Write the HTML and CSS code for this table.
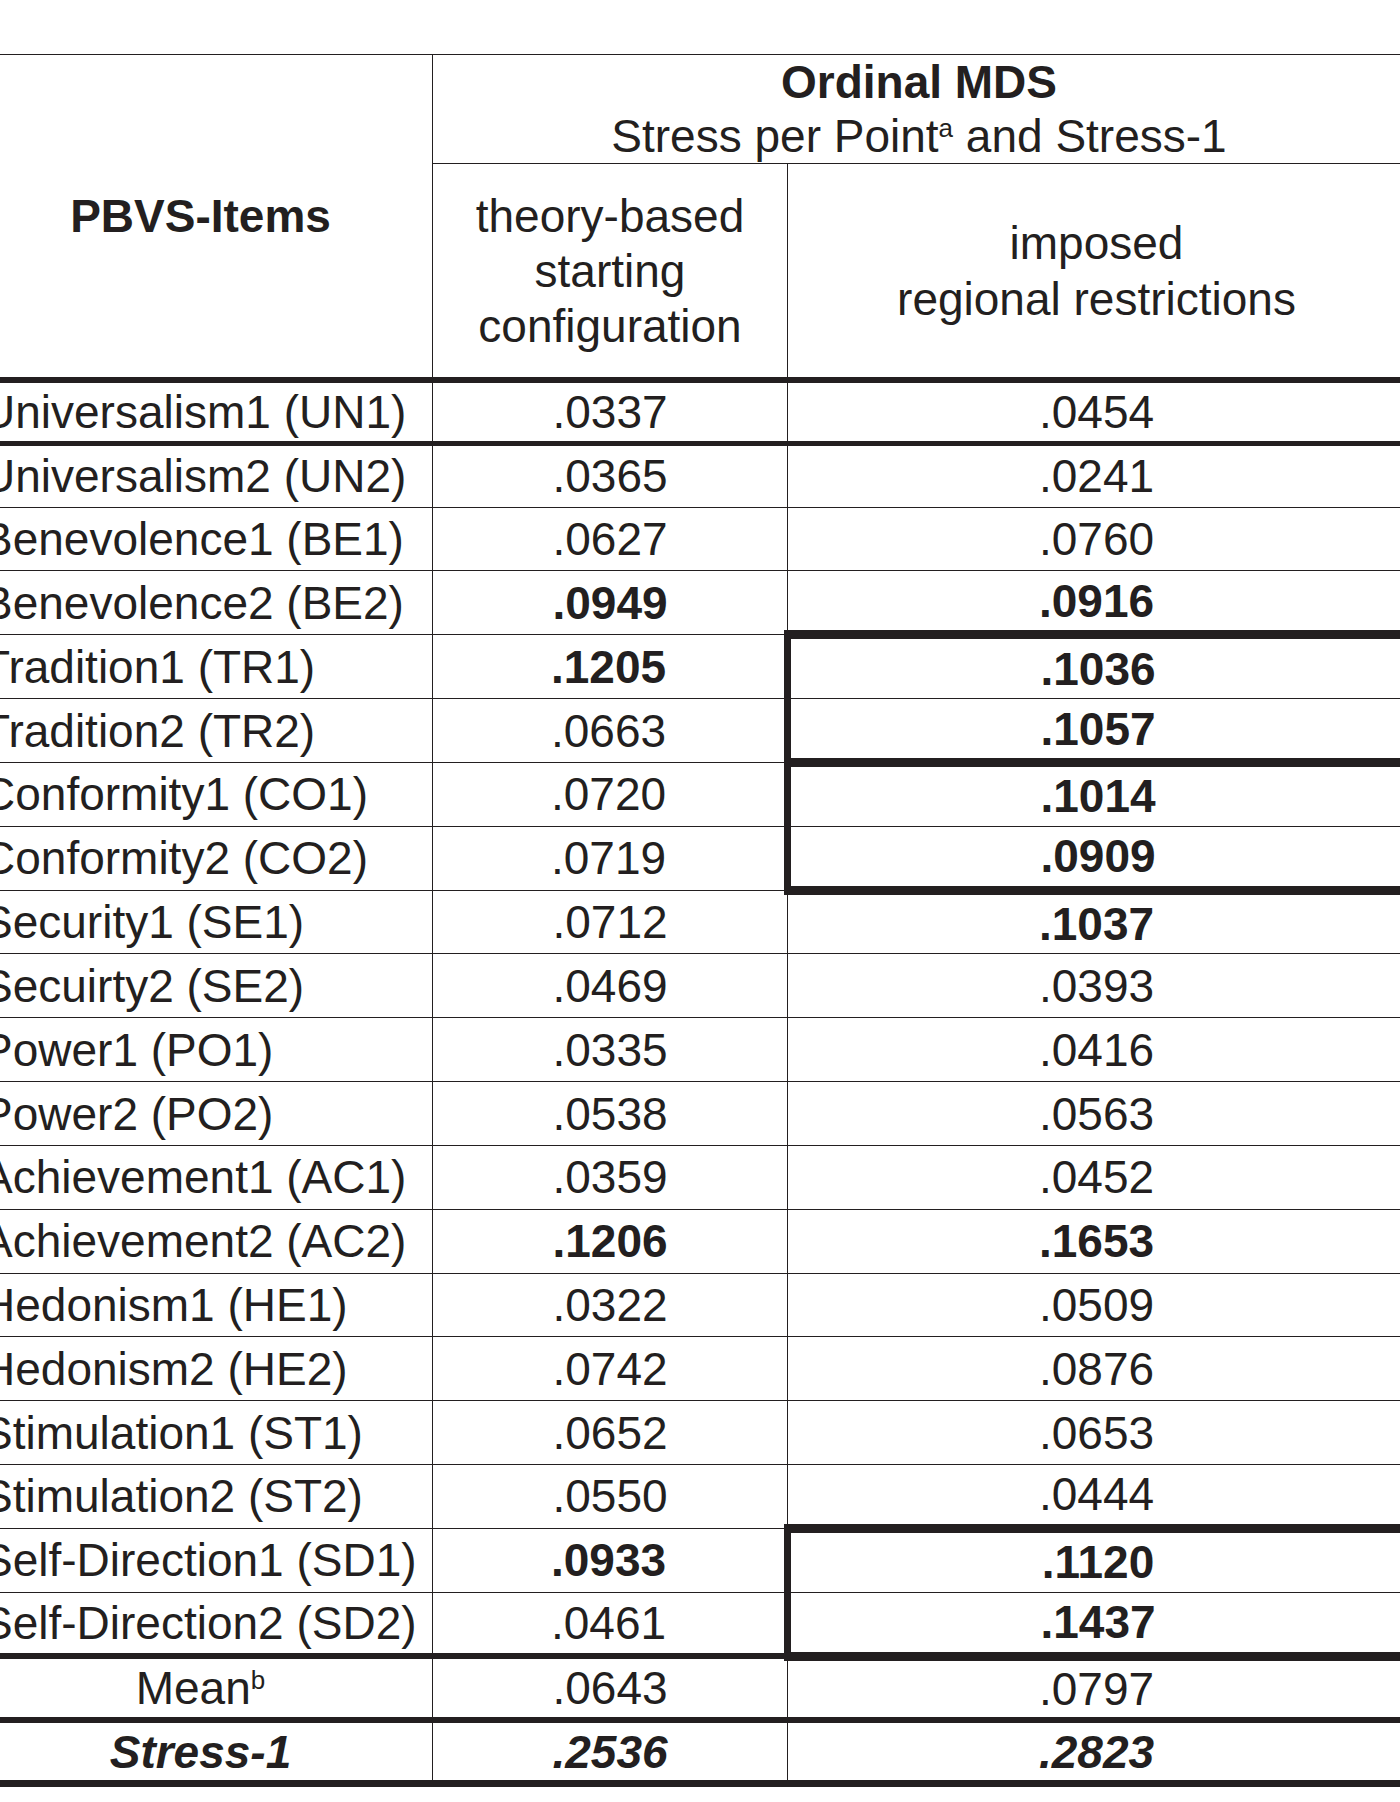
FILE: index.html
```html
<!DOCTYPE html>
<html lang="en">
<head>
<meta charset="utf-8">
<title>Ordinal MDS Stress per Point</title>
<link rel="stylesheet" href="styles.css">
</head>
<body>
<table class="mds">
  <colgroup>
    <col class="c-item">
    <col class="c-theory">
    <col class="c-imposed">
  </colgroup>
  <thead>
    <tr class="h1">
      <th class="items" rowspan="2">PBVS-Items</th>
      <th class="group" colspan="2"><span class="b">Ordinal MDS</span><br>Stress per Point<sup>a</sup> and Stress-1</th>
    </tr>
    <tr class="h2">
      <th class="sub">theory-based<br>starting<br>configuration</th>
      <th class="sub sub2">imposed<br>regional restrictions</th>
    </tr>
  </thead>
  <tbody>
    <tr class="row top-thick"><td class="name">Universalism1 (UN1)</td><td>.0337</td><td>.0454</td></tr>
    <tr class="row top-mid"><td class="name">Universalism2 (UN2)</td><td>.0365</td><td>.0241</td></tr>
    <tr class="row"><td class="name">Benevolence1 (BE1)</td><td>.0627</td><td>.0760</td></tr>
    <tr class="row"><td class="name">Benevolence2 (BE2)</td><td class="b">.0949</td><td class="b">.0916</td></tr>
    <tr class="row"><td class="name">Tradition1 (TR1)</td><td class="b">.1205</td><td class="b box box-top">.1036</td></tr>
    <tr class="row"><td class="name">Tradition2 (TR2)</td><td>.0663</td><td class="b box box-bottom">.1057</td></tr>
    <tr class="row"><td class="name">Conformity1 (CO1)</td><td>.0720</td><td class="b box box-top">.1014</td></tr>
    <tr class="row"><td class="name">Conformity2 (CO2)</td><td>.0719</td><td class="b box box-bottom">.0909</td></tr>
    <tr class="row"><td class="name">Security1 (SE1)</td><td>.0712</td><td class="b">.1037</td></tr>
    <tr class="row"><td class="name">Secuirty2 (SE2)</td><td>.0469</td><td>.0393</td></tr>
    <tr class="row"><td class="name">Power1 (PO1)</td><td>.0335</td><td>.0416</td></tr>
    <tr class="row"><td class="name">Power2 (PO2)</td><td>.0538</td><td>.0563</td></tr>
    <tr class="row"><td class="name">Achievement1 (AC1)</td><td>.0359</td><td>.0452</td></tr>
    <tr class="row"><td class="name">Achievement2 (AC2)</td><td class="b">.1206</td><td class="b">.1653</td></tr>
    <tr class="row"><td class="name">Hedonism1 (HE1)</td><td>.0322</td><td>.0509</td></tr>
    <tr class="row"><td class="name">Hedonism2 (HE2)</td><td>.0742</td><td>.0876</td></tr>
    <tr class="row"><td class="name">Stimulation1 (ST1)</td><td>.0652</td><td>.0653</td></tr>
    <tr class="row"><td class="name">Stimulation2 (ST2)</td><td>.0550</td><td>.0444</td></tr>
    <tr class="row"><td class="name">Self-Direction1 (SD1)</td><td class="b">.0933</td><td class="b box box-top">.1120</td></tr>
    <tr class="row"><td class="name">Self-Direction2 (SD2)</td><td>.0461</td><td class="b box box-bottom">.1437</td></tr>
    <tr class="row top-thick"><td>Mean<sup>b</sup></td><td>.0643</td><td>.0797</td></tr>
    <tr class="row top-thick bottom-thick"><td class="bi">Stress-1</td><td class="bi">.2536</td><td class="bi">.2823</td></tr>
  </tbody>
</table>
</body>
</html>
```

FILE: styles.css
```css
html, body {
  margin: 0;
  padding: 0;
  background: #ffffff;
  overflow: hidden;
}

body {
  font-family: "Liberation Sans", Arial, Helvetica, sans-serif;
  color: #231f20;
}

.mds {
  border-collapse: collapse;
  table-layout: fixed;
  width: 1437px;
  margin: 54px 0 0 -32px;
  font-size: 46px;
}

.c-item { width: 464px; }
.c-theory { width: 355px; }
.c-imposed { width: 618px; }

.mds th,
.mds td {
  border: 1px solid #231f20;
  padding: 0;
  text-align: center;
  vertical-align: middle;
  font-weight: 400;
  white-space: nowrap;
}

.mds .h1 { height: 108px; }
.mds .h1 th { line-height: 54px; }
.mds .h2 { height: 216px; }
.mds .sub { line-height: 55px; padding-top: 2px; }
.mds .sub2 { line-height: 56px; }

.mds th.items { font-weight: 700; }

.mds .b { font-weight: 700; }
.mds .bi { font-weight: 700; font-style: italic; }

.mds sup {
  font-size: 26px;
  line-height: 0;
  vertical-align: 15px;
}

.mds .row { height: 63.84px; }
.mds td.name { text-align: left; padding-left: 13px; }

.mds .top-thick td { border-top: 6px solid #231f20; }
.mds .top-mid td { border-top: 5px solid #231f20; }
.mds .bottom-thick td { border-bottom: 7px solid #231f20; }

.mds td.box { border-left: 7px solid #231f20; }
.mds td.box-top { border-top: 9px solid #231f20; }
.mds td.box-bottom { border-bottom: 9px solid #231f20; }
```
